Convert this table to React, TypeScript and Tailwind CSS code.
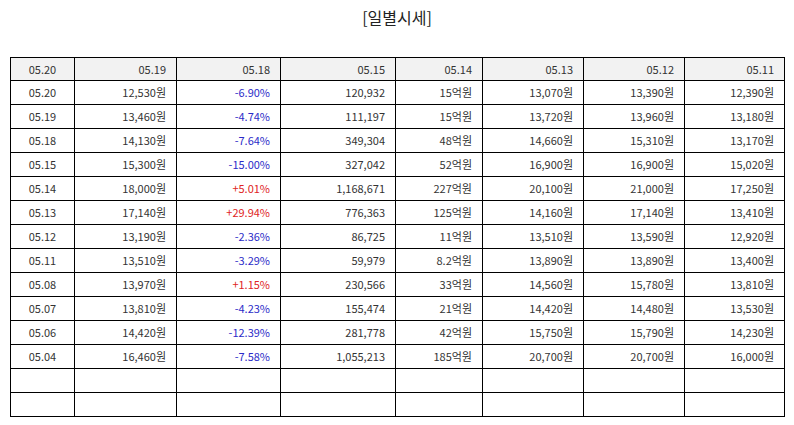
const head = ['05.20', '05.19', '05.18', '05.15', '05.14', '05.13', '05.12', '05.11']

// date, close, change, volume, amount, high?, open?, low?
const rows: string[][] = [
  ['05.20', '12,530원', '-6.90%', '120,932', '15억원', '13,070원', '13,390원', '12,390원'],
  ['05.19', '13,460원', '-4.74%', '111,197', '15억원', '13,720원', '13,960원', '13,180원'],
  ['05.18', '14,130원', '-7.64%', '349,304', '48억원', '14,660원', '15,310원', '13,170원'],
  ['05.15', '15,300원', '-15.00%', '327,042', '52억원', '16,900원', '16,900원', '15,020원'],
  ['05.14', '18,000원', '+5.01%', '1,168,671', '227억원', '20,100원', '21,000원', '17,250원'],
  ['05.13', '17,140원', '+29.94%', '776,363', '125억원', '14,160원', '17,140원', '13,410원'],
  ['05.12', '13,190원', '-2.36%', '86,725', '11억원', '13,510원', '13,590원', '12,920원'],
  ['05.11', '13,510원', '-3.29%', '59,979', '8.2억원', '13,890원', '13,890원', '13,400원'],
  ['05.08', '13,970원', '+1.15%', '230,566', '33억원', '14,560원', '15,780원', '13,810원'],
  ['05.07', '13,810원', '-4.23%', '155,474', '21억원', '14,420원', '14,480원', '13,530원'],
  ['05.06', '14,420원', '-12.39%', '281,778', '42억원', '15,750원', '15,790원', '14,230원'],
  ['05.04', '16,460원', '-7.58%', '1,055,213', '185억원', '20,700원', '20,700원', '16,000원'],
  ['', '', '', '', '', '', '', ''],
  ['', '', '', '', '', '', '', ''],
]

const widths = ['w-[64px]', 'w-[102px]', 'w-[104px]', 'w-[115px]', 'w-[87px]', 'w-[101px]', 'w-[101px]', 'w-[100px]']

function changeColor(v: string) {
  if (v.startsWith('+')) return 'text-[#e02424]'
  if (v.startsWith('-')) return 'text-[#2b2bc8]'
  return ''
}

export default function App() {
  return (
    <div className="w-[794px] h-[425px] bg-white text-[#333] font-['Noto_Sans_CJK_KR','Noto_Sans',sans-serif] overflow-hidden">
      <h1 className="pt-[6px] h-[57px] text-center text-[16px] leading-[22px] text-[#222] font-normal">
        [일별시세]
      </h1>
      <table className="ml-[10px] w-[775px] table-fixed border-collapse text-[11px]">
        <colgroup>
          {widths.map((w, i) => (
            <col key={i} className={w} />
          ))}
        </colgroup>
        <thead>
          <tr className="bg-[#f2f2f2]">
            {head.map((h, i) => (
              <th
                key={i}
                className={`h-[23px] border border-black font-normal ${i === 0 ? 'text-center' : 'text-right pr-[10px]'}`}
              >
                {h}
              </th>
            ))}
          </tr>
        </thead>
        <tbody>
          {rows.map((r, ri) => (
            <tr key={ri}>
              {r.map((c, ci) => (
                <td
                  key={ci}
                  className={`h-[24px] border border-black ${ci === 0 ? 'text-center' : 'text-right pr-[10px]'} ${ci === 2 ? changeColor(c) : ''}`}
                >
                  {c}
                </td>
              ))}
            </tr>
          ))}
        </tbody>
      </table>
    </div>
  )
}
